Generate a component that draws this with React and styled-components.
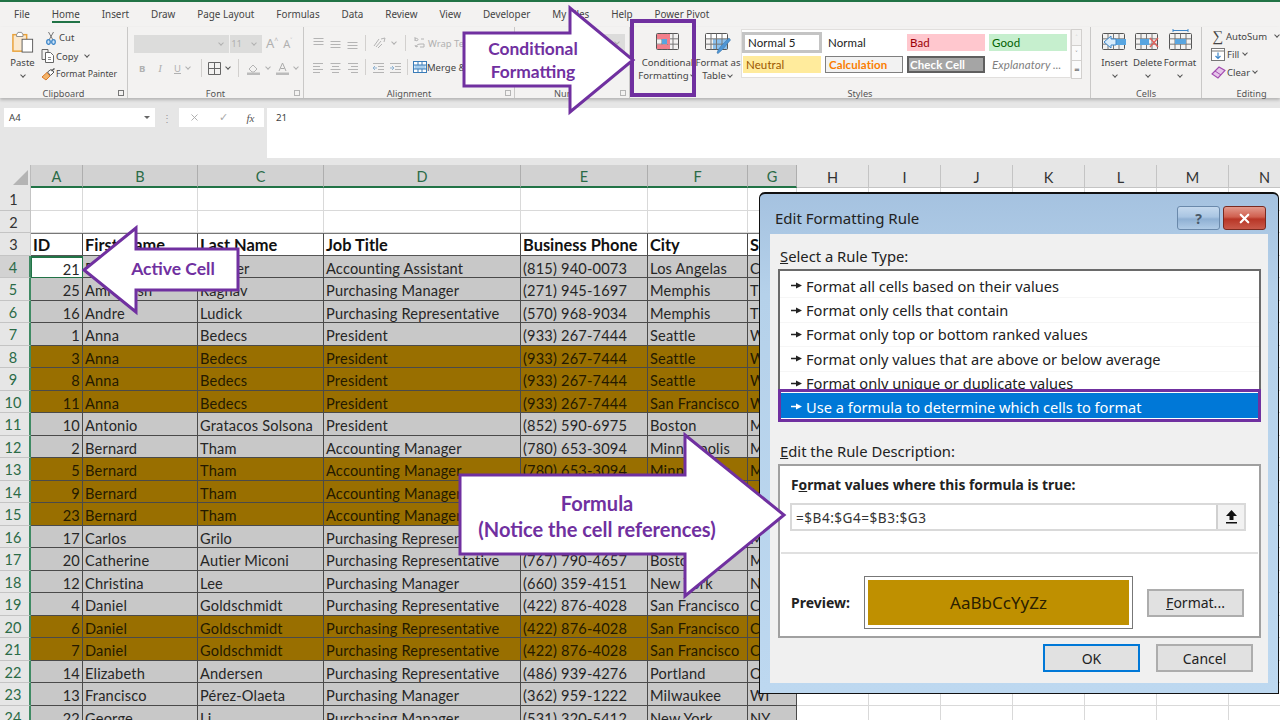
import React from "react";
import styled, { createGlobalStyle } from "styled-components";
import { X } from "lucide-react";

const Global = createGlobalStyle`
  html, body { margin: 0; padding: 0; background: #fff; }
  * { box-sizing: border-box; }
`;

const UI = `"Noto Sans", "Open Sans", sans-serif`;
const CAL = `Lato, "Liberation Sans", sans-serif`;
const PURPLE = "#7030a0";

const Page = styled.div`
  position: relative; width: 1280px; height: 720px; overflow: hidden; background: #fff;
  font-family: ${UI}; color: #333;
`;
const TabBar = styled.div`
  display: flex; gap: 21.9px; height: 27px; padding: 5px 0 0 14px; background: #f3f2f1;
  border-top: 2px solid #217346;
`;
const Tab = styled.div`
  height: 16px; font-size: 9.9px; line-height: 14px; color: #444; white-space: nowrap;
  border-bottom: 2px solid ${p => (p.$active ? "#217346" : "transparent")};
`;
const Ribbon = styled.div`
  position: relative; z-index: 1; display: flex; height: 71px; background: #f3f2f1;
  box-shadow: 0 2px 3px rgba(0,0,0,.22);
`;
const Group = styled.div`
  position: relative; display: flex; flex-direction: column; flex: none; width: ${p => p.$w}px; height: 71px;
  border-right: 1px solid ${p => (p.$last ? "transparent" : "#c9c8c7")};
`;
const GroupBody = styled.div`
  display: flex; flex: 1; min-height: 0; gap: ${p => p.$gap || 0}px;
  padding: ${p => p.$pad || "0"};
`;
const GroupFoot = styled.div`
  display: grid; grid-template-columns: 1fr auto 1fr; align-items: center; height: 14px; margin-bottom: -2px;
  font-size: 9.2px; color: #555;
`;
const GroupName = styled.span`
  grid-column: 2; white-space: nowrap; line-height: 13px;
`;
const Launcher = styled.span`
  grid-column: 3; justify-self: end; width: 6px; height: 6px; margin-right: 3px;
  border: 1px solid ${p => (p.$off ? "#b5b5b5" : "#777")};
`;
const Col = styled.div`
  display: flex; flex-direction: column; gap: ${p => p.$gap || 0}px; align-items: ${p => p.$align || "stretch"};
  width: ${p => (p.$w ? `${p.$w}px` : "auto")}; flex: none; margin-top: ${p => p.$mt || 0}px;
`;
const Row = styled.div`
  display: flex; align-items: center; gap: ${p => p.$gap || 0}px; height: ${p => (p.$h ? `${p.$h}px` : "auto")};
  margin-top: ${p => p.$mt || 0}px;
`;
const Small = styled.span`
  font-size: ${p => p.$fs || 9.5}px; line-height: 13px; white-space: nowrap; color: ${p => (p.$off ? "#b0b0b0" : "#444")};
  font-weight: ${p => (p.$bold ? 700 : 400)}; font-family: ${p => (p.$serif ? `"Liberation Serif", serif` : UI)};
  font-style: ${p => (p.$italic ? "italic" : "normal")}; text-decoration: ${p => (p.$under ? "underline" : "none")};
  margin-top: ${p => p.$mt || 0}px; margin-bottom: ${p => p.$mb || 0}px; margin-left: ${p => p.$ml || 0}px; margin-right: ${p => p.$mr || 0}px;
`;
const Chevron = styled.i`
  display: inline-block; width: 4px; height: 4px; flex: none; margin: ${p => p.$mt || 0}px ${p => p.$mx ?? 2}px 2px; transform: rotate(45deg);
  border-right: 1px solid ${p => (p.$off ? "#b0b0b0" : "#555")}; border-bottom: 1px solid ${p => (p.$off ? "#b0b0b0" : "#555")};
`;
const FontBox = styled.div`
  display: flex; align-items: center; justify-content: flex-end; width: ${p => p.$w}px; height: 18px; padding: 0 4px;
  background: #dcdcdb; margin-right: 1px; font-size: 9.6px; color: #b0b0b0;
`;
const VSep = styled.div`
  width: 1px; height: ${p => p.$h || 18}px; background: #d2d0ce; margin: 0 ${p => p.$mx ?? 3}px;
`;
const Spacer = styled.span`
  flex: none; width: ${p => p.$w}px;
`;
const BigButton = styled.div`
  display: flex; flex-direction: column; align-items: center; flex: none; width: ${p => p.$w}px; padding-top: 2px;
`;
const BigIconSlot = styled.div`
  display: flex; align-items: flex-start; height: 24px; margin-bottom: 3px; padding-top: ${p => p.$top ?? 4}px;
`;
const BigLabel = styled.span`
  font-size: 9.6px; line-height: 13px; color: #444; white-space: nowrap; text-align: center;
`;
const Gallery = styled.div`
  display: grid; grid-template-columns: repeat(4, 82px); grid-template-rows: 21px 17px; gap: 3px 0;
  width: 330px; height: 49px; margin-top: 2px; padding: 2px 1px; background: #fff; border: 1px solid #e1dfdd;
`;
const Style = styled.div`
  display: flex; align-items: center; align-self: center; width: ${p => p.$w || 78}px; height: ${p => p.$h || 17}px;
  margin-left: ${p => p.$ml || 0}px; padding-left: ${p => p.$pl ?? 3}px; overflow: hidden; white-space: nowrap;
  font-family: ${CAL}; font-size: 11.5px; letter-spacing: .1px;
  background: ${p => p.$bg || "#fff"}; color: ${p => p.$c || "#222"};
  font-weight: ${p => (p.$bold ? 700 : 400)}; font-style: ${p => (p.$italic ? "italic" : "normal")};
  border: ${p => p.$border || "none"};
`;
const GalleryScroll = styled.div`
  display: flex; flex-direction: column; width: 11px; height: 49px; margin-top: 2px; flex: none;
`;
const ScrollBtn = styled.div`
  flex: ${p => p.$grow}; display: flex; align-items: center; justify-content: center;
  background: ${p => (p.$off ? "#f3f2f1" : "#fbfbfb")}; border: 1px solid #d2d0ce; margin-bottom: -1px; font-size: 7px; color: ${p => (p.$off ? "#bbb" : "#444")};
`;
const Sigma = styled.span`
  font-family: "Liberation Serif", serif; font-size: 15px; line-height: 14px; color: #444; width: 13px; text-align: center;
`;

const FormulaBar = styled.div`
  display: flex; height: 67px; padding-top: 10px; background: #e6e6e6;
`;
const NameBox = styled.div`
  display: flex; align-items: center; justify-content: space-between; width: 151px; height: 19px; margin-left: 4px; padding: 0 5px;
  background: #fff; font-size: 9.6px; color: #444;
`;
const Caret = styled.i`
  width: 0; height: 0; border: 3px solid transparent; border-top: 3px solid #666; margin-top: 3px;
`;
const Dots = styled.div`
  width: 24px; height: 19px; display: flex; align-items: center; justify-content: center; color: #999; font-size: 10px;
`;
const FxBox = styled.div`
  display: flex; align-items: center; justify-content: space-around; width: 85px; height: 19px; background: #fff; padding: 0;
  font-family: "Liberation Serif", serif; font-style: italic; font-size: 11px; color: #555;
`;
const Check = styled.span`
  color: #aaa; font-style: normal;
`;
const FormulaInput = styled.div`
  flex: 1; height: 50px; margin-left: 3px; padding: 3px 9px; background: #fff; font-size: 9.8px; line-height: 13px; color: #444;
`;

const Sheet = styled.div`
  display: grid;
  grid-template-columns: 31px 52px 115px 126px 197px 127px 100px 49px repeat(7, 72px);
  grid-template-rows: 23px repeat(24, 22.5px);
  width: 1301px;
  font-family: ${CAL};
`;
const Corner = styled.div`
  background: #e6e6e6; border-right: 1px solid #bbb; display: flex; align-items: flex-end; justify-content: flex-end; padding: 0 2px 3px 0;
`;
const CornerTri = styled.i`
  width: 0; height: 0; border-left: 15px solid transparent; border-bottom: 15px solid #b4b4b4;
`;
const ColHead = styled.div`
  display: flex; align-items: center; justify-content: center; font-size: 14.5px; padding-top: 2px;
  background: ${p => (p.$sel ? "#d2d2d2" : "#e6e6e6")}; color: ${p => (p.$sel ? "#2b6b47" : "#333")};
  border-right: 1px solid ${p => (p.$sel ? "#aeaeae" : "#c4c4c4")};
  border-bottom: ${p => (p.$sel ? "2px solid #217346" : "1px solid #c4c4c4")};
`;
const RowHead = styled.div`
  display: flex; align-items: center; justify-content: center; font-size: 14.5px; padding: 2px 3px 0 0;
  background: ${p => (p.$active ? "#d2d2d2" : "#e6e6e6")}; color: ${p => (p.$sel ? "#2b6b47" : "#333")};
  border-bottom: 1px solid #c4c4c4;
  border-right: ${p => (p.$sel ? "2px solid #3f8a63" : "1px solid #c4c4c4")};
`;
const fills = { gray: "#c8c8c8", brown: "#996f00", white: "#fff" };
const Cell = styled.div`
  display: flex; align-items: center; justify-content: ${p => (p.$right ? "flex-end" : "flex-start")};
  padding: 4px 2px 0 2px; overflow: hidden; white-space: nowrap; font-size: 14.6px; letter-spacing: .18px;
  background: ${p => fills[p.$fill]}; color: ${p => (p.$fill === "brown" ? "#241a00" : "#262626")};
  border-right: 1px solid #4a4a4a; border-bottom: 1px solid #4a4a4a;
`;
const HeadCell = styled(Cell)`
  font-weight: 700; font-size: 16.4px; letter-spacing: 0; color: #111; background: #fff; padding: 0 2px 1px;
  border-top: 1px solid #777; border-bottom: 1px solid #555; align-items: flex-end;
`;
const ActiveCell = styled(Cell)`
  border: 1px solid #217346; border-top: 2px solid #217346; background: #fff;
`;
const Blank = styled.div`
  background: #fff; border-right: 1px solid #d9d9d9; border-bottom: 1px solid #d9d9d9;
`;

const Dialog = styled.div`
  position: absolute; left: 759px; top: 192px; width: 520px; height: 502px; z-index: 3;
  display: flex; flex-direction: column; padding: 0 10px 10px;
  background: linear-gradient(180deg, #a5c2e0 0%, #b5d1ea 20%, #bdd8f0 100%);
  border: 1px solid #111; border-width: 2px 1px 1px 1px; border-radius: 6px 6px 0 0;
`;
const TitleBar = styled.div`
  display: flex; align-items: flex-start; flex: none; height: 40px; padding: 12px 2px 0 5px;
`;
const Title = styled.div`
  flex: 1; font-size: 15px; line-height: 24px; color: #222;
`;
const WinBtn = styled.div`
  display: flex; align-items: center; justify-content: center; width: 43px; height: 24px; margin-left: 3px; border-radius: 3px;
  font-size: 14px; font-weight: 700;
  border: 1px solid ${p => (p.$close ? "#7a2a20" : "#6a89ab")};
  background: ${p => (p.$close
    ? "linear-gradient(180deg,#e39a8d 0%,#d0604f 45%,#b83626 55%,#c9594a 100%)"
    : "linear-gradient(180deg,#c5d9ee 0%,#a9c5e2 45%,#8fb0d3 55%,#b0cbe6 100%)")};
  color: ${p => (p.$close ? "#fff" : "#4a5a6a")};
`;
const DialogBody = styled.div`
  flex: 1; background: #f0f0f0; padding: 14px 7px 0 8px;
`;
const DlgLabel = styled.div`
  height: 16px; padding-left: 2px; font-size: 14.8px; line-height: 16px; color: #222; white-space: nowrap; margin-top: ${p => p.$mt || 0}px;
`;
const Und = styled.span`
  text-decoration: underline;
`;
const ListBox = styled.div`
  display: flex; flex-direction: column; height: 153px; margin-top: 5px; padding-top: 3px;
  background: #fff; border: 2px solid #6a6a6a;
`;
const RuleItem = styled.div`
  display: flex; align-items: center; flex: none; gap: 4px; height: 24.4px; padding-left: 11px;
  font-size: 14.6px; color: #222; white-space: nowrap; overflow: hidden;
  border-bottom: 1px solid #f6f6f6;
`;
const RuleSelected = styled(RuleItem)`
  position: relative; height: 33px; margin: -7px -2px 0; padding: 3px 0 0 10px; border: 3px solid ${PURPLE}; background: #0078d7; color: #fff;
  box-shadow: inset 0 1px 0 #fff, inset 0 -1px 0 #fff;
`;
const DescBox = styled.div`
  height: 174px; margin-top: 5px; padding: 11px 0 0; background: #fff; border: 2px solid #a0a0a0;
`;
const DescHead = styled.div`
  height: 16px; margin-left: 11px; font-size: 13.8px; line-height: 16px; font-weight: 700; color: #222; white-space: nowrap;
`;
const FormulaField = styled.div`
  display: flex; align-items: center; width: 456px; height: 28px; margin: 10px 0 0 10px; padding-left: 4px; background: #fff;
  border: 2px solid #d9d9d9; font-size: 13.6px; letter-spacing: .5px; color: #333; justify-content: space-between;
`;
const UpBtn = styled.div`
  display: flex; align-items: center; justify-content: center; width: 28px; height: 24px; background: #f2f2f2; border-left: 2px solid #d0d0d0;
`;
const Divider = styled.div`
  height: 2px; margin: 21px 1px 0; background: #e0e0e0;
`;
const PreviewRow = styled.div`
  display: flex; align-items: center; margin: 22px 0 0 11px;
`;
const PreviewLabel = styled.div`
  width: 73px; font-size: 14px; font-weight: 700; color: #222;
`;
const PreviewBox = styled.div`
  display: flex; width: 269px; height: 53px; padding: 3px; background: #fff; border: 1px solid #777;
`;
const PreviewFill = styled.div`
  flex: 1; display: flex; align-items: center; justify-content: center; background: #bf9000;
  font-size: 17px; color: #2b2000;
`;
const DlgBtn = styled.div`
  display: flex; align-items: center; justify-content: center; flex: none; width: 97px; height: 28px;
  margin-left: ${p => p.$ml || 0}px; background: #e1e1e1; font-size: 14px; color: #222;
  border: ${p => (p.$def ? "2px solid #0078d7" : "2px solid #adadad")};
`;
const DlgFooter = styled.div`
  display: flex; justify-content: flex-end; margin: 6px 8px 0 0;
`;

const Callout = styled.div`
  position: absolute; left: ${p => p.$x}px; top: ${p => p.$y}px; width: ${p => p.$w}px; height: ${p => p.$h}px; z-index: ${p => p.$z || 4};
`;
const CalloutShape = styled.svg`
  display: block; overflow: visible;
`;
const CalloutText = styled.div`
  position: absolute; left: ${p => p.$x}px; top: ${p => p.$y}px; width: ${p => p.$w}px;
  text-align: center; font-family: ${CAL}; font-weight: 700; color: ${PURPLE}; white-space: nowrap;
  font-size: ${p => p.$fs}px; line-height: ${p => p.$lh}px;
`;
const CfHighlight = styled.div`
  position: absolute; left: 630px; top: 19px; width: 66px; height: 78px; border: 4px solid ${PURPLE}; z-index: 5;
`;

const Svg = ({ w, h, vb, children }) => <svg width={w} height={h} viewBox={vb || `0 0 ${w} ${h}`} fill="none">{children}</svg>;

const PasteIcon = () => (
  <Svg w={22} h={22} vb="0 0 24 24">
    <rect x="1" y="4" width="15" height="18" fill="#fbe9cf" stroke="#e9a23b" strokeWidth="1.6" />
    <path d="M5 4 L6.5 1.5 H10.5 L12 4 V6 H5 Z" fill="#fff" stroke="#888" />
    <rect x="11" y="9" width="11.5" height="14" fill="#fff" stroke="#555" />
  </Svg>
);
const CutIcon = () => (
  <Svg w={10} h={14}>
    <path d="M2.5 1 L7 9 M7.5 1 L3 9" stroke="#777" strokeWidth="1" />
    <ellipse cx="2.5" cy="11" rx="1.8" ry="2.4" stroke="#3f87c9" strokeWidth="1.3" fill="#cfe3f5" />
    <ellipse cx="7.5" cy="11" rx="1.8" ry="2.4" stroke="#3f87c9" strokeWidth="1.3" fill="#cfe3f5" />
  </Svg>
);
const CopyIcon = () => (
  <Svg w={14} h={14}>
    <path d="M1 .5 H7 V3 M1 .5 V10.5 H4" stroke="#666" />
    <path d="M4.5 3.5 H9.5 L12.5 6.5 V13.5 H4.5 Z" fill="#fff" stroke="#666" />
    <path d="M7 8.5 H10 M7 10.5 H10" stroke="#888" />
  </Svg>
);
const PainterIcon = () => (
  <Svg w={15} h={13}>
    <path d="M1 9 L6 4.5 L9 8 L5 12 Z" fill="#f3b46a" stroke="#d9792a" />
    <path d="M6.5 4 L10 1.5 L13 4 L9.5 7.5 Z" fill="#fff" stroke="#555" />
    <path d="M10.5 3 L13.5 .5" stroke="#555" strokeWidth="1.4" />
  </Svg>
);
const AlignIcon = ({ mode = "left", v = "mid", off = true, rows = [10, 7, 10, 7] }) => {
  const n = rows.length;
  const y0 = v === "top" ? 1 : v === "bot" ? 11 - (n - 1) * 3 : v === "mid" && n === 4 ? 2 : 4;
  return (
    <Svg w={13} h={13}>
      {rows.map((w, i) => {
        const x = mode === "left" ? 1 : mode === "right" ? 12 - w : 6.5 - w / 2;
        return <path key={i} d={`M${x} ${y0 + i * 3 + .5} h${w}`} stroke={off ? "#b4b4b4" : "#555"} />;
      })}
    </Svg>
  );
};
const OrientIcon = () => (
  <Svg w={14} h={13}>
    <path d="M2 9 L7 2 M4 10 L9 4 M6 11 L10 7" stroke="#b4b4b4" />
    <path d="M9 2 L13 1 L12 5" stroke="#b4b4b4" />
  </Svg>
);
const IndentIcon = ({ out }) => (
  <Svg w={13} h={13}>
    <path d="M1 2.5 H12 M6 5.5 H12 M6 8.5 H12 M1 11.5 H12" stroke="#b4b4b4" />
    <path d={out ? "M5 7 H1 M3 5 L1 7 L3 9" : "M1 7 H5 M3 5 L5 7 L3 9"} stroke="#8fb3d3" />
  </Svg>
);
const WrapIcon = () => (
  <Svg w={13} h={14}>
    <path d="M2 1 V5 M2 3 C4 1.5 5 3 5 3.5 C5 5 3 5 2 4 M8 3 H11 M8 8 C5 8 3 9 3 11 L5 10 M3 11 L2 9 M8 8 H11 V11 H7" stroke="#b4b4b4" />
  </Svg>
);
const MergeIcon = () => (
  <Svg w={14} h={14}>
    <rect x=".5" y="1.5" width="13" height="11" fill="#fff" stroke="#3a7cb8" />
    <rect x="1.5" y="5" width="11" height="4" fill="#a9cfee" />
    <path d="M.5 5 H13.5 M.5 9 H13.5 M5 1.5 V5 M9 1.5 V5 M5 9 V12.5 M9 9 V12.5" stroke="#3a7cb8" />
  </Svg>
);
const BorderIcon = () => (
  <Svg w={13} h={13}>
    <path d="M.5 .5 H12.5 V12.5 H.5 Z M6.5 .5 V12.5 M.5 6.5 H12.5" stroke="#666" />
  </Svg>
);
const FillColorIcon = () => (
  <Svg w={13} h={13}>
    <path d="M2 7 L6 3 L10 7 L7 10 H5 Z" stroke="#b4b4b4" />
    <rect x="0" y="10.5" width="13" height="2.5" fill="#bbb" />
  </Svg>
);
const FontColorIcon = () => (
  <Svg w={13} h={13}>
    <path d="M3 9 L6.5 1 L10 9 M4.5 6.5 H8.5" stroke="#aaa" />
    <rect x="0" y="10.5" width="13" height="2.5" fill="#bbb" />
  </Svg>
);
const GridBase = ({ w = 23, h = 17 }) => (
  <>
    <rect x=".5" y=".5" width={w - 1} height={h - 1} rx="1" stroke="#555" fill="none" />
    {[1, 2, 3].map(i => <path key={i} d={`M${(i * (w - 1)) / 4 + .5} .5 V${h - .5}`} stroke="#777" />)}
    {[1, 2].map(i => <path key={i} d={`M.5 ${(i * (h - 1)) / 3 + .5} H${w - .5}`} stroke="#777" />)}
  </>
);
const CfIcon = () => (
  <Svg w={23} h={18}>
    <GridBase />
    <rect x="1" y="1" width="13" height="5" fill="#f27f8b" />
    <rect x="1" y="11.5" width="13" height="4.5" fill="#f27f8b" />
    <rect x="6" y="6" width="5" height="5" fill="#58a5e0" />
    <rect x="11" y="6" width="3" height="5" fill="#f27f8b" />
  </Svg>
);
const TableIcon = () => (
  <Svg w={26} h={22}>
    <rect x=".5" y=".5" width="22" height="5" fill="#fff" />
    <rect x="8" y="6" width="15" height="10" fill="#8cc0ec" />
    <GridBase />
    <path d="M12 20 C13 15 20 9 24 5 L25.5 7 C22 11 18 17 13 20.5 Z" fill="#4e95d4" stroke="#3f78ad" strokeWidth=".6" />
  </Svg>
);
const InsertIcon = () => (
  <Svg w={25} h={18}>
    <GridBase />
    <rect x="5" y="6" width="19" height="6" fill="#58a5e0" />
    <path d="M9 3 L2 9 L9 15 V12 H14 V6 H9 Z" fill="#d8ebfa" stroke="#3f87c9" />
  </Svg>
);
const DeleteIcon = () => (
  <Svg w={25} h={18}>
    <GridBase />
    <rect x="5" y="6" width="9" height="6" fill="#58a5e0" />
    <path d="M15 5 L23 14 M23 5 L15 14" stroke="#e0605a" strokeWidth="1.4" />
  </Svg>
);
const FormatCellIcon = () => (
  <Svg w={23} h={22}>
    <path d="M4 1.5 H19 M4 0 V3 M19 0 V3" stroke="#3f87c9" />
    <g transform="translate(0 4)">
      <GridBase />
      <rect x="6" y="6" width="11" height="5" fill="#58a5e0" />
    </g>
  </Svg>
);
const FillIcon = () => (
  <Svg w={14} h={13}>
    <rect x=".5" y=".5" width="13" height="12" fill="#fff" stroke="#777" />
    <path d="M.5 3 H13.5" stroke="#777" />
    <path d="M7 4.5 V10.5 M4.5 8 L7 10.5 L9.5 8" stroke="#3f87c9" strokeWidth="1.2" />
  </Svg>
);
const ClearIcon = () => (
  <Svg w={15} h={13}>
    <path d="M1 8 L8 1 L14 4.5 L7 12 Z" fill="#e6c6ea" stroke="#a24ab0" strokeWidth="1.1" />
    <path d="M4 5 L10 9" stroke="#a24ab0" />
  </Svg>
);
const RuleArrow = () => (
  <svg width="11" height="7" viewBox="0 0 11 7"><path d="M0 2.8 H5 V.5 L11 3.5 L5 6.5 V4.2 H0 Z" fill="currentColor" /></svg>
);
const UpArrow = () => (
  <svg width="13" height="14" viewBox="0 0 13 14"><path d="M6.5 0 L12 6 H8.5 V10 H4.5 V6 H1 Z M1 12 H12 V13.5 H1 Z" fill="#111" /></svg>
);

const cols = ["A", "B", "C", "D", "E", "F", "G", "H", "I", "J", "K", "L", "M", "N"];
const anna = ["Anna", "Bedecs", "President", "(933) 267-7444"];
const th = ["Bernard", "Tham", "Accounting Manager", "(780) 653-3094"];
const dan = ["Daniel", "Goldschmidt", "Purchasing Representative", "(422) 876-4028", "San Francisco", "CA"];
const data = [
  [21, "Roland", "Wacker", "Accounting Assistant", "(815) 940-0073", "Los Angelas", "CA"],
  [25, "Amritansh", "Raghav", "Purchasing Manager", "(271) 945-1697", "Memphis", "TN"],
  [16, "Andre", "Ludick", "Purchasing Representative", "(570) 968-9034", "Memphis", "TN"],
  [1, ...anna, "Seattle", "WA"],
  [3, ...anna, "Seattle", "WA", 1],
  [8, ...anna, "Seattle", "WA", 1],
  [11, ...anna, "San Francisco", "WA", 1],
  [10, "Antonio", "Gratacos Solsona", "President", "(852) 590-6975", "Boston", "MA"],
  [2, ...th, "Minneapolis", "MN"],
  [5, ...th, "Minneapolis", "MN", 1],
  [9, ...th, "Minneapolis", "MN", 1],
  [23, ...th, "Minneapolis", "MN", 1],
  [17, "Carlos", "Grilo", "Purchasing Representative", "(767) 790-4657", "Boston", "MA"],
  [20, "Catherine", "Autier Miconi", "Purchasing Representative", "(767) 790-4657", "Boston", "MA"],
  [12, "Christina", "Lee", "Purchasing Manager", "(660) 359-4151", "New York", "NY"],
  [4, ...dan],
  [6, ...dan, 1],
  [7, ...dan, 1],
  [14, "Elizabeth", "Andersen", "Purchasing Representative", "(486) 939-4276", "Portland", "OR"],
  [13, "Francisco", "Pérez-Olaeta", "Purchasing Manager", "(362) 959-1222", "Milwaukee", "WI"],
  [22, "George", "Li", "Purchasing Manager", "(531) 320-5412", "New York", "NY"],
];
const headers = ["ID", "First Name", "Last Name", "Job Title", "Business Phone", "City", "State"];
const rules = [
  "Format all cells based on their values",
  "Format only cells that contain",
  "Format only top or bottom ranked values",
  "Format only values that are above or below average",
  "Format only unique or duplicate values",
];
const blanks = n => Array.from({ length: n }, (_, i) => <Blank key={`b${i}`} />);

export default function App() {
  return (
    <Page>
      <Global />
      <TabBar>
        {["File", "Home", "Insert", "Draw", "Page Layout", "Formulas", "Data", "Review", "View", "Developer", "My Files", "Help", "Power Pivot"].map(t => (
          <Tab key={t} $active={t === "Home"}>{t}</Tab>
        ))}
      </TabBar>
      <Ribbon>
        <Group $w={128}>
          <GroupBody $pad="1px 0 0 10px" $gap={6}>
            <Col $w={25} $align="center" $mt={3}>
              <PasteIcon />
              <Small $mt={3}>Paste</Small>
              <Chevron $mt={4} />
            </Col>
            <Col>
              <Row $h={19} $gap={3}><Spacer $w={2} /><CutIcon /><Small>Cut</Small></Row>
              <Row $h={18} $gap={1}><CopyIcon /><Small>Copy</Small><Chevron $mx={6} /></Row>
              <Row $h={18}><PainterIcon /><Small $fs={8.7}>Format Painter</Small></Row>
            </Col>
          </GroupBody>
          <GroupFoot><GroupName>Clipboard</GroupName><Launcher /></GroupFoot>
        </Group>
        <Group $w={176}>
          <GroupBody $pad="7px 0 0 6px">
            <Col>
              <Row>
                <FontBox $w={95}><Chevron $off /></FontBox>
                <FontBox $w={32}><Small $off $mr={8}>11</Small><Chevron $off /></FontBox>
                <Small $off $fs={13} $ml={3}>A</Small><Small $off $fs={7} $mb={6}>^</Small>
                <Small $off $fs={11} $ml={5}>A</Small><Small $off $fs={7} $mb={6}>˅</Small>
              </Row>
              <Row $mt={6} $h={18}>
                <Small $off $bold $ml={5}>B</Small>
                <Small $off $italic $serif $fs={11} $ml={13}>I</Small>
                <Small $off $under $ml={12}>U</Small>
                <Chevron $off $mx={5} />
                <VSep $mx={6} />
                <BorderIcon />
                <Chevron $mx={5} />
                <VSep $mx={3} />
                <Spacer $w={5} />
                <FillColorIcon /><Chevron $off $mx={6} />
                <FontColorIcon /><Chevron $off $mx={5} />
              </Row>
            </Col>
          </GroupBody>
          <GroupFoot><GroupName>Font</GroupName><Launcher $off /></GroupFoot>
        </Group>
        <Group $w={211}>
          <GroupBody $pad="7px 0 0 8px">
            <Col>
              <Row $h={18} $gap={4}>
                <AlignIcon mode="center" v="top" rows={[10, 10, 10]} />
                <AlignIcon mode="center" rows={[10, 10, 10]} />
                <AlignIcon mode="center" v="bot" rows={[10, 10, 10]} />
                <VSep $h={16} $mx={2} />
                <OrientIcon /><Chevron $off />
                <VSep $h={16} $mx={3} />
                <WrapIcon /><Small $off $ml={-2}>Wrap Text</Small>
              </Row>
              <Row $mt={6} $h={18} $gap={4}>
                <AlignIcon mode="left" />
                <AlignIcon mode="center" />
                <AlignIcon mode="right" />
                <VSep $h={16} $mx={2} />
                <IndentIcon out /><IndentIcon />
                <VSep $h={16} $mx={1} />
                <MergeIcon /><Small $ml={-4}>Merge &amp; Center</Small>
              </Row>
            </Col>
          </GroupBody>
          <GroupFoot><GroupName>Alignment</GroupName><Launcher $off /></GroupFoot>
        </Group>
        <Group $w={115}>
          <GroupBody $pad="7px 0 0 5px">
            <FontBox $w={105}><Chevron $off /></FontBox>
          </GroupBody>
          <GroupFoot><GroupName>Number</GroupName><Launcher $off /></GroupFoot>
        </Group>
        <Group $w={461}>
          <GroupBody>
            <BigButton $w={75}>
              <BigIconSlot><CfIcon /></BigIconSlot>
              <BigLabel>Conditional</BigLabel>
              <BigLabel>Formatting<Chevron /></BigLabel>
            </BigButton>
            <BigButton $w={26}>
              <BigIconSlot><TableIcon /></BigIconSlot>
              <BigLabel>Format as</BigLabel>
              <BigLabel>Table<Chevron /></BigLabel>
            </BigButton>
            <Spacer $w={10} />
            <Gallery>
              <Style $w={80} $h={21} $ml={-1} $border="3px solid #c4c4c4">Normal 5</Style>
              <Style>Normal</Style>
              <Style $bg="#ffc7ce" $c="#9c0006">Bad</Style>
              <Style $bg="#c6efce" $c="#006100">Good</Style>
              <Style $bg="#ffeb9c" $c="#9c5700">Neutral</Style>
              <Style $bg="#f2f2f2" $c="#fa7d00" $bold $border="1px solid #7f7f7f">Calculation</Style>
              <Style $bg="#a5a5a5" $c="#fff" $bold $pl={1} $border="2px solid #5f5f5f">Check Cell</Style>
              <Style $c="#7f7f7f" $italic>Explanatory ...</Style>
            </Gallery>
            <GalleryScroll>
              <ScrollBtn $grow={16} $off>˄</ScrollBtn>
              <ScrollBtn $grow={15}>˅</ScrollBtn>
              <ScrollBtn $grow={18}>≂</ScrollBtn>
            </GalleryScroll>
          </GroupBody>
          <GroupFoot><GroupName>Styles</GroupName></GroupFoot>
        </Group>
        <Group $w={111}>
          <GroupBody $pad="0 0 0 7px">
            <BigButton $w={33}>
              <BigIconSlot><InsertIcon /></BigIconSlot>
              <BigLabel>Insert</BigLabel><Chevron $mt={4} />
            </BigButton>
            <BigButton $w={33}>
              <BigIconSlot><DeleteIcon /></BigIconSlot>
              <BigLabel>Delete</BigLabel><Chevron $mt={4} />
            </BigButton>
            <BigButton $w={32}>
              <BigIconSlot $top={0}><FormatCellIcon /></BigIconSlot>
              <BigLabel>Format</BigLabel><Chevron $mt={4} />
            </BigButton>
          </GroupBody>
          <GroupFoot><GroupName>Cells</GroupName></GroupFoot>
        </Group>
        <Group $w={100} $last>
          <GroupBody $pad="0 0 0 9px">
            <Col>
              <Row $h={18} $gap={2}><Sigma>∑</Sigma><Small>AutoSum</Small><Chevron $mx={6} /></Row>
              <Row $h={18} $gap={2}><FillIcon /><Small>Fill</Small><Chevron /></Row>
              <Row $h={18} $gap={1}><ClearIcon /><Small>Clear</Small><Chevron /></Row>
            </Col>
          </GroupBody>
          <GroupFoot><GroupName>Editing</GroupName></GroupFoot>
        </Group>
      </Ribbon>
      <FormulaBar>
        <NameBox>A4<Caret /></NameBox>
        <Dots>⋮</Dots>
        <FxBox><X size={11} color="#aaa" /><Check>✓</Check><span>fx</span></FxBox>
        <FormulaInput>21</FormulaInput>
      </FormulaBar>
      <Sheet>
        <Corner><CornerTri /></Corner>
        {cols.map((c, i) => <ColHead key={c} $sel={i < 7}>{c}</ColHead>)}
        <RowHead>1</RowHead>{blanks(14)}
        <RowHead>2</RowHead>{blanks(14)}
        <RowHead>3</RowHead>
        {headers.map(h => <HeadCell key={h} $fill="white">{h}</HeadCell>)}
        {blanks(7)}
        {data.map((r, i) => {
          const fill = r[7] ? "brown" : "gray";
          return (
            <React.Fragment key={i}>
              <RowHead $sel $active={i === 0}>{i + 4}</RowHead>
              {i === 0
                ? <ActiveCell $fill="white" $right>{r[0]}</ActiveCell>
                : <Cell $fill={fill} $right>{r[0]}</Cell>}
              {r.slice(1, 7).map((v, j) => <Cell key={j} $fill={fill}>{v}</Cell>)}
              {blanks(7)}
            </React.Fragment>
          );
        })}
      </Sheet>

      <CfHighlight />

      <Callout $x={462} $y={6} $w={175} $h={108} $z={6}>
        <CalloutShape width="175" height="108" viewBox="0 0 175 108">
          <polygon points="2,27 108,27 108,2 171,54 108,106 108,80 2,80" fill="#fff" stroke={PURPLE} strokeWidth="3" />
        </CalloutShape>
        <CalloutText $x={4} $y={30.5} $w={134} $fs={17.4} $lh={23}>Conditional<br />Formatting</CalloutText>
      </Callout>
      <Callout $x={82} $y={226} $w={158} $h={88}>
        <CalloutShape width="158" height="88" viewBox="0 0 158 88">
          <polygon points="2,44 54,2 54,23 156,23 156,64 54,64 54,86" fill="#fff" stroke={PURPLE} strokeWidth="3" />
        </CalloutShape>
        <CalloutText $x={41} $y={32} $w={100} $fs={17.5} $lh={22}>Active Cell</CalloutText>
      </Callout>

      <Dialog>
        <TitleBar>
          <Title>Edit Formatting Rule</Title>
          <WinBtn>?</WinBtn>
          <WinBtn $close><X size={15} strokeWidth={3.5} /></WinBtn>
        </TitleBar>
        <DialogBody>
          <DlgLabel><Und>S</Und>elect a Rule Type:</DlgLabel>
          <ListBox>
            {rules.map(t => <RuleItem key={t}><RuleArrow />{t}</RuleItem>)}
            <RuleSelected><RuleArrow />Use a formula to determine which cells to format</RuleSelected>
          </ListBox>
          <DlgLabel $mt={21}><Und>E</Und>dit the Rule Description:</DlgLabel>
          <DescBox>
            <DescHead>F<Und>o</Und>rmat values where this formula is true:</DescHead>
            <FormulaField>=$B4:$G4=$B3:$G3<UpBtn><UpArrow /></UpBtn></FormulaField>
            <Divider />
            <PreviewRow>
              <PreviewLabel>Preview:</PreviewLabel>
              <PreviewBox><PreviewFill>AaBbCcYyZz</PreviewFill></PreviewBox>
              <DlgBtn $ml={14}><Und>F</Und>ormat...</DlgBtn>
            </PreviewRow>
          </DescBox>
          <DlgFooter>
            <DlgBtn $def>OK</DlgBtn>
            <DlgBtn $ml={16}>Cancel</DlgBtn>
          </DlgFooter>
        </DialogBody>
      </Dialog>

      <Callout $x={458} $y={433} $w={328} $h={165}>
        <CalloutShape width="328" height="165" viewBox="0 0 328 165">
          <polygon points="2,42 227,42 227,2 326,82 227,163 227,121 2,121" fill="#fff" stroke={PURPLE} strokeWidth="3" />
        </CalloutShape>
        <CalloutText $x={4} $y={57} $w={270} $fs={20} $lh={26}>Formula<br />(Notice the cell references)</CalloutText>
      </Callout>
    </Page>
  );
}
